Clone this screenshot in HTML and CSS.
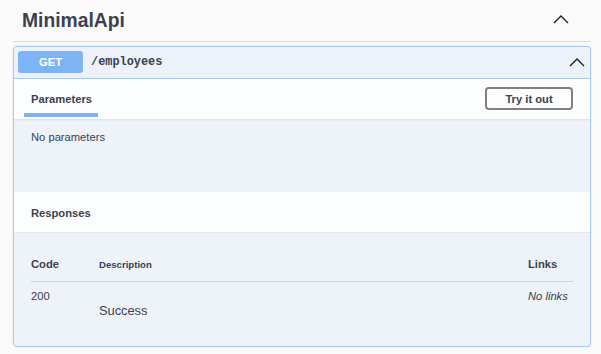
FILE: index.html
```html
<!DOCTYPE html>
<html>
<head>
<meta charset="utf-8">
<link rel="stylesheet" href="styles.css">
</head>
<body>
<div class="tag">
  <h3 class="tag-title">MinimalApi</h3>
  <svg class="chev chev-top" viewBox="0 0 16 9" width="16" height="9"><polyline points="1,8 8,1 15,8" fill="none" stroke="#1f1f1f" stroke-width="1.4"/></svg>
</div>
<div class="opblock">
  <div class="summary">
    <span class="method">GET</span>
    <span class="path">/employees</span>
    <svg class="chev chev-op" viewBox="0 0 16 9" width="16" height="9"><polyline points="1,8 8,1 15,8" fill="none" stroke="#1f1f1f" stroke-width="1.4"/></svg>
  </div>
  <div class="sec-head">
    <div class="tab"><span>Parameters</span></div>
    <button class="try">Try it out</button>
  </div>
  <div class="params-body">No parameters</div>
  <div class="sec-head resp-head">
    <span class="sec-title">Responses</span>
  </div>
  <div class="resp-body">
    <div class="resp-table">
      <div class="th code-col">Code</div>
      <div class="th desc-col">Description</div>
      <div class="th links-col">Links</div>
      <div class="td code-cell">200</div>
      <div class="td desc-cell">Success</div>
      <div class="td links-cell">No links</div>
    </div>
  </div>
</div>
</body>
</html>
```
FILE: styles.css
```css
html, body {
  margin: 0;
  padding: 0;
}
body {
  background: #fafafa;
  font-family: "Liberation Sans", Arial, sans-serif;
  color: #3b4151;
  width: 601px;
  height: 354px;
  overflow: hidden;
}
.tag {
  display: flex;
  align-items: center;
  justify-content: space-between;
  height: 41px;
  margin: 0 10px 0 13px;
  padding-left: 9px;
  border-bottom: 1px solid #d9d9d9;
}
.tag-title {
  margin: 0;
  font-size: 19.3px;
  font-weight: bold;
  color: #3b4151;
}
.chev { display: block; }
.chev-top {
  margin-right: 22px;
  margin-top: -2px;
}
.opblock {
  margin: 4px 10px 0 13px;
  border: 1px solid #a9cbf3;
  border-radius: 4px;
  background: #eef2f9;
  box-shadow: 0 0 2px rgba(0,0,0,0.12);
  overflow: hidden;
}
.summary {
  display: flex;
  align-items: center;
  height: 31px;
  padding: 0 5px 0 4px;
  background: #edf2fa;
  border-bottom: 1px solid #a9cbf3;
}
.method {
  display: flex;
  align-items: center;
  justify-content: center;
  width: 65px;
  height: 22px;
  border-radius: 3px;
  background: #7eb4f6;
  color: #fff;
  font-weight: bold;
  font-size: 11.2px;
  margin-top: -1px;
}
.path {
  margin-left: 8px;
  font-family: "Liberation Mono", "DejaVu Sans Mono", monospace;
  font-size: 11.9px;
  color: #3b4151;
  font-weight: 600;
  margin-top: -1px;
}
.chev-op {
  margin-left: auto;
  margin-top: -1px;
}
.sec-head {
  display: flex;
  align-items: center;
  justify-content: space-between;
  height: 40px;
  padding: 0 17px 0 10px;
  background: #fcfdfe;
  box-shadow: 0 1px 2px rgba(0,0,0,0.08);
  position: relative;
}
.tab {
  align-self: stretch;
  display: flex;
  align-items: center;
  padding: 0 6px 0 7px;
  position: relative;
}
.tab span {
  font-weight: bold;
  font-size: 11.2px;
  color: #3b4151;
}
.tab::after {
  content: "";
  position: absolute;
  left: 0;
  right: 0;
  bottom: 2px;
  height: 4px;
  background: #7eb4f6;
}
.try {
  width: 88px;
  height: 23px;
  border: 2px solid #808080;
  border-radius: 4px;
  background: transparent;
  font-family: "Liberation Sans", Arial, sans-serif;
  font-weight: bold;
  font-size: 11.2px;
  color: #3b4151;
  padding: 0;
  margin-top: -1px;
}
.params-body {
  height: 73px;
  box-sizing: border-box;
  padding: 12px 17px 0;
  font-size: 11.2px;
  color: #3b4151;
}
.resp-head {
  padding-left: 17px;
  border-bottom: 1px solid #e3e7ef;
  box-shadow: none;
}
.sec-title {
  font-weight: bold;
  font-size: 11.2px;
  margin-top: 1px;
}
.resp-body {
  padding: 25px 17px 0;
  height: 113px;
  box-sizing: border-box;
}
.resp-table {
  display: grid;
  grid-template-columns: 68px 1fr 45px;
  font-size: 11.2px;
  color: #3b4151;
}
.th {
  font-weight: bold;
  height: 23px;
  border-bottom: 1px solid #cdd3de;
}
.desc-col { font-size: 9.6px; padding-top: 1px; height: 22px; }
.code-cell {
  padding-top: 8px;
}
.desc-cell {
  padding-top: 21px;
  font-size: 12.8px;
}
.links-cell {
  padding-top: 8px;
  font-style: italic;
}
```
